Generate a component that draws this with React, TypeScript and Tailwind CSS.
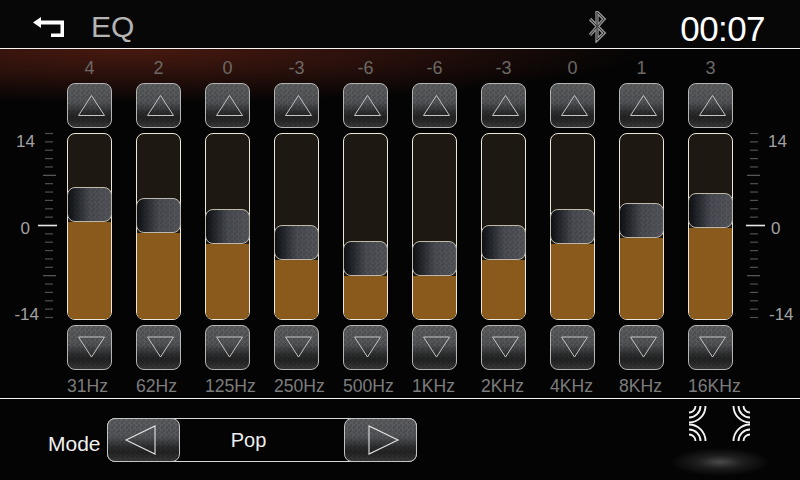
const bands = [
  { v: 4, l: "31Hz" },
  { v: 2, l: "62Hz" },
  { v: 0, l: "125Hz" },
  { v: -3, l: "250Hz" },
  { v: -6, l: "500Hz" },
  { v: -6, l: "1KHz" },
  { v: -3, l: "2KHz" },
  { v: 0, l: "4KHz" },
  { v: 1, l: "8KHz" },
  { v: 3, l: "16KHz" },
];

const btnBg =
  "[background:repeating-conic-gradient(#0000_0_25%,#0000001f_0_50%)_0_0/5px_5px,linear-gradient(to_bottom,#5c5e60_0%,#525457_42%,#2a2b2c_68%,#232324_80%,#383839_100%)]";
const thumbBg =
  "[background:repeating-conic-gradient(#0000_0_25%,#0000001c_0_50%)_0_0/5px_5px,linear-gradient(to_right,#0e1014_0%,#2a2d32_25%,#4a4c53_50%,#55565c_100%)]";

function Tri({ dir }: { dir: "up" | "down" }) {
  return (
    <svg width="43" height="43" viewBox="0 0 43 43" fill="none" className="block">
      <polygon
        points={dir === "up" ? "10.5,31.5 36.5,31.5 23.5,11.5" : "10.5,11 36.5,11 23.5,31"}
        stroke="#c4c4c4"
        strokeWidth="1"
      />
    </svg>
  );
}

function StepButton({ dir }: { dir: "up" | "down" }) {
  return (
    <div className={`h-[45px] w-[45px] rounded-lg border border-[#b4b4b4] ${btnBg}`}>
      <Tri dir={dir} />
    </div>
  );
}

function Slider({ v }: { v: number }) {
  const top = 208 - (16 / 3) * v;
  const fill = 318.5 - (top + 35);
  return (
    <div className="flex h-[187px] w-[45px] flex-col rounded-lg border-[1.5px] border-[#ebe7da] bg-[#1e1812]">
      <div className="flex-1" />
      <div className={`-mx-[1.5px] h-[35px] w-[45px] rounded-lg border border-[#bdb9ab] ${thumbBg}`} />
      <div className="rounded-b-md bg-[#8a5a1c]" style={{ height: fill }} />
    </div>
  );
}

function Ticks({ side }: { side: "left" | "right" }) {
  const rows = Array.from({ length: 23 }, (_, i) => i);
  return (
    <svg width="20" height="190" viewBox="0 0 20 190" className="block">
      {rows.map((i) => {
        const y = 3.5 + i * (92 / 11);
        const d = Math.abs(i - 11);
        let x1: number, x2: number, c: string;
        if (side === "left") {
          if (d === 0) { x1 = 0; x2 = 19; c = "#e8e8e8"; }
          else if (d === 6) { x1 = 5; x2 = 18; c = "#5e5e5e"; }
          else { x1 = 7; x2 = 15; c = "#505050"; }
        } else {
          if (d === 0) { x1 = 0; x2 = 19; c = "#e8e8e8"; }
          else if (d === 6) { x1 = 1; x2 = 14; c = "#5e5e5e"; }
          else { x1 = 4; x2 = 12; c = "#505050"; }
        }
        return <line key={i} x1={x1} x2={x2} y1={y} y2={y} stroke={c} strokeWidth={d === 0 ? 1.6 : 1.2} />;
      })}
    </svg>
  );
}

function Speakers() {
  const arcs = (cx: number, cy: number, sx: number, sy: number, k: string) =>
    [6.5, 11.5, 16.5].map((r) => (
      <path
        key={k + r}
        d={`M ${cx + sx * r} ${cy} A ${r} ${r} 0 0 ${sx * sy > 0 ? 1 : 0} ${cx} ${cy + sy * r}`}
        stroke="#f2f2f2"
        strokeWidth="1.9"
        fill="none"
      />
    ));
  return (
    <svg width="62" height="36" viewBox="0 0 62 36" className="block">
      {arcs(0, 0, 1, 1, "a")}
      {arcs(61, 0, -1, 1, "b")}
      {arcs(0, 35, 1, -1, "c")}
      {arcs(61, 35, -1, -1, "d")}
    </svg>
  );
}

export default function App() {
  return (
    <div className="flex h-[480px] w-[800px] flex-col overflow-hidden bg-[#040404] font-['Liberation_Sans',Arial,sans-serif]">
      <header className="flex h-[48px] items-center bg-[#070707]">
        <svg width="36" height="26" viewBox="0 0 36 26" className="ml-[30px] mt-[4px] block">
          <path d="M3 9.5 L11 4 V7.5 H34 V24 H21 V20.5 H30.5 V11.5 H11 V15 Z" fill="#fff" />
        </svg>
        <span className="ml-[25px] mt-[5px] text-[30px] leading-none text-[#b4b4b4]">EQ</span>
        <svg width="20" height="32" viewBox="0 0 20 32" className="ml-[453px] mt-[6px] block" fill="none">
          <path d="M3 8 L17 22 L10 29 V1 L17 8 L3 24" stroke="#8e8e8e" strokeWidth="3.4" />
          <path d="M3 8 L17 22 L10 29 V1 L17 8 L3 24" stroke="#2a2a2a" strokeWidth="0.9" />
        </svg>
        <span className="ml-[73px] mt-[9px] text-[35px] leading-none tracking-[-0.6px] text-white">00:07</span>
      </header>
      <div className="h-px bg-[#f4f4f4]" />

      <main className="flex h-[349px] bg-[radial-gradient(ellipse_520px_54px_at_130px_0,#47190f_0%,#2c110c_45%,#0000_100%)]">
        <div className="flex w-[67px] pt-[84px]">
          <div className="flex h-[187px] w-[39px] flex-col justify-between pt-[2px] text-right text-[17px] leading-[14px] text-[#a2a2a2]">
            <span className="pr-[4px]">14</span>
            <span className="pr-[9px]">0</span>
            <span className="-mb-[2px]">-14</span>
          </div>
          <div className="-mt-[3px] ml-[-1px]">
            <Ticks side="left" />
          </div>
        </div>

        <div className="flex gap-[24px]">
          {bands.map((b) => (
            <div key={b.l} className="flex w-[45px] flex-col">
              <div className="flex h-[34px] items-center justify-center pt-[3px] text-[18px] leading-none text-[#6c6864]">{b.v}</div>
              <StepButton dir="up" />
              <div className="mt-[5px]">
                <Slider v={b.v} />
              </div>
              <div className="mt-[5px]">
                <StepButton dir="down" />
              </div>
              <div className="mt-[7px] whitespace-nowrap text-[17.6px] leading-[18px] text-[#7c7c7c]">{b.l}</div>
            </div>
          ))}
        </div>

        <div className="ml-[13px] flex pt-[84px]">
          <div className="-mt-[3px]">
            <Ticks side="right" />
          </div>
          <div className="h-[187px] flex-1 pt-[2px]">
            <div className="flex h-full flex-col justify-between text-[17px] leading-[14px] text-[#a2a2a2]">
              <span className="ml-[2px]">14</span>
              <span className="ml-[5px]">0</span>
              <span className="-mb-[2px] ml-[3px]">-14</span>
            </div>
          </div>
        </div>
      </main>

      <div className="h-px bg-[#f4f4f4]" />

      <footer className="flex flex-1 bg-[#040404] pl-[48px]">
        <span className="mt-[33px] w-[59px] text-[21px] leading-6 text-[#f0f0f0]">Mode</span>
        <div className="mt-[19px] flex h-[44px] w-[310px] items-center rounded-lg border border-[#d8d8d8]">
          <div className={`-my-px -ml-px h-[44px] w-[73px] rounded-lg border border-[#c4c4c4] ${btnBg}`}>
            <svg width="71" height="42" viewBox="0 0 71 42" fill="none" className="block">
              <polygon points="18,21 47,7 47,35" stroke="#e2e2e2" strokeWidth="1.1" />
            </svg>
          </div>
          <span className="flex-1 pr-[27px] text-center text-[20px] leading-none text-[#ededed]">Pop</span>
          <div className={`-my-px -mr-px h-[44px] w-[73px] rounded-lg border border-[#c4c4c4] ${btnBg}`}>
            <svg width="71" height="42" viewBox="0 0 71 42" fill="none" className="block">
              <polygon points="24,7 24,35 53,21" stroke="#e2e2e2" strokeWidth="1.1" />
            </svg>
          </div>
        </div>
        <div className="ml-[253px] mt-[7px] flex w-[100px] flex-col items-center">
          <Speakers />
          <div className="mt-[6px] h-[28px] w-[100px] bg-[radial-gradient(ellipse_50%_50%_at_50%_50%,#4a4a4a_0%,#1e1e1e_45%,#0000_100%)]" />
        </div>
      </footer>
    </div>
  );
}
